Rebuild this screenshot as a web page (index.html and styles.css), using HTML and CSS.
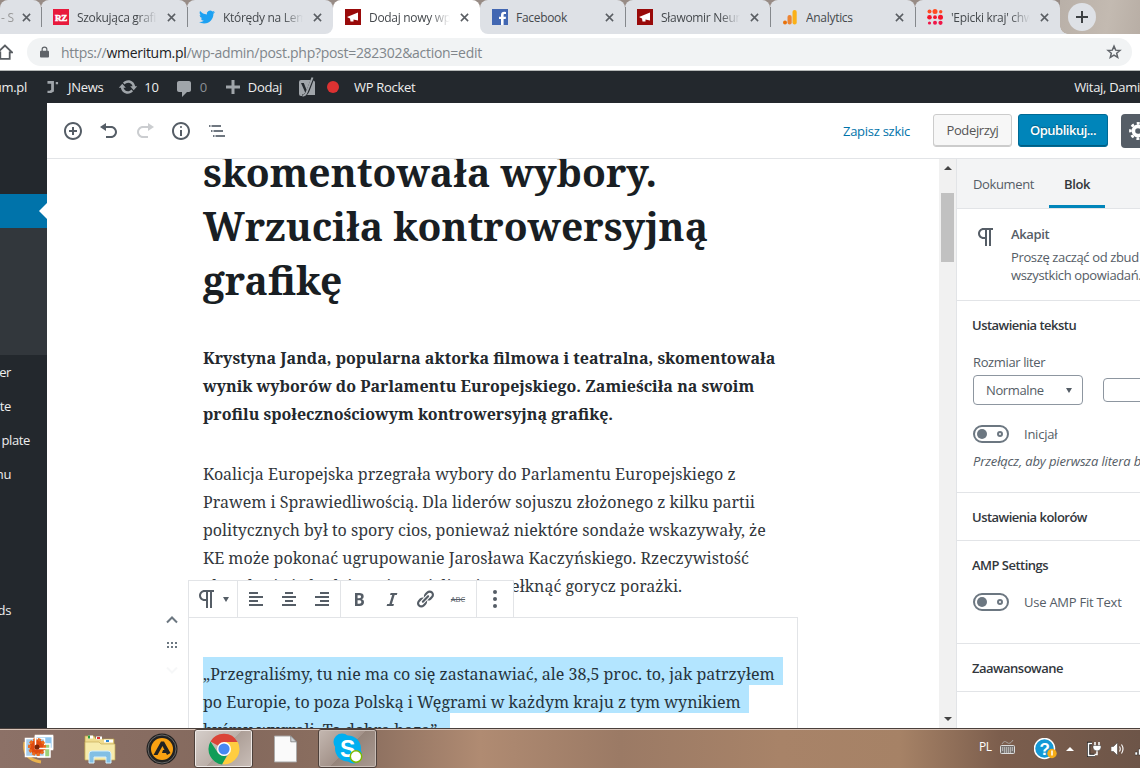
FILE: index.html
```html
<!DOCTYPE html>
<html lang="pl">
<head>
  <meta charset="UTF-8">
  <meta name="viewport" content="width=device-width, initial-scale=1.0">
  <title>Dodaj nowy wpis</title>
  <link rel="stylesheet" href="styles.css">
</head>
<body>
  <div class="screen">

    <!-- browser tabs -->
    <div class="tabs">
      <div class="tab tab-first"><span class="tab-title fade">- S</span><svg class="close" viewBox="0 0 10 10"><path d="M1 1l8 8M9 1l-8 8"/></svg></div>
      <div class="tab wide sep">
        <svg class="fav" viewBox="0 0 16 16"><rect width="16" height="16" fill="#e8193c"/><text x="8" y="11.500" text-anchor="middle" font-family="Liberation Serif, serif" font-weight="bold" font-size="9" fill="#fff" stroke="#fff" stroke-width=".5">RZ</text></svg>
        <span class="tab-title fade">Szokująca grafika</span><svg class="close" viewBox="0 0 10 10"><path d="M1 1l8 8M9 1l-8 8"/></svg>
      </div>
      <div class="tab wide sep before-active">
        <svg class="fav" viewBox="0 0 24 24"><path fill="#1da1f2" d="M23.95 4.57a10 10 0 01-2.82.78 4.96 4.96 0 002.16-2.73c-.95.56-2 .96-3.13 1.19a4.92 4.92 0 00-8.38 4.48C7.69 8.1 4.07 6.13 1.64 3.16a4.82 4.82 0 00-.67 2.48c0 1.71.87 3.21 2.19 4.1a4.9 4.9 0 01-2.23-.62v.06a4.92 4.92 0 003.95 4.83 5 5 0 01-2.21.08 4.94 4.94 0 004.6 3.42A9.87 9.87 0 010 19.54a14 14 0 007.56 2.21c9.05 0 14-7.5 14-13.99v-.63A9.94 9.94 0 0024 4.59z"/></svg>
        <span class="tab-title fade">Którędy na Lemo</span><svg class="close" viewBox="0 0 10 10"><path d="M1 1l8 8M9 1l-8 8"/></svg>
      </div>
      <div class="tab active">
        <svg class="fav" viewBox="0 0 16 16"><rect width="16" height="16" fill="#990a0a"/><path fill="#fff" d="M2 8l11-4.500v8L8.500 10.500v2H5.500L5 9.500z"/></svg>
        <span class="tab-title fade">Dodaj nowy wpis</span><svg class="close" viewBox="0 0 10 10"><path d="M1 1l8 8M9 1l-8 8"/></svg>
      </div>
      <div class="tab after-active">
        <svg class="fav" viewBox="0 0 16 16"><rect width="16" height="16" fill="#4267b2"/><path fill="#fff" d="M9 16v-6H7V7.700h2V6c0-2.200 1.300-3.200 3.200-3.200l1.800.1v2.200h-1.200c-1 0-1.200.5-1.200 1.100v1.500H14l-.3 2.300h-2.100v6z"/></svg>
        <span class="tab-title">Facebook</span><svg class="close" viewBox="0 0 10 10"><path d="M1 1l8 8M9 1l-8 8"/></svg>
      </div>
      <div class="tab sep">
        <svg class="fav" viewBox="0 0 16 16"><rect width="16" height="16" fill="#990a0a"/><path fill="#fff" d="M2 8l11-4.500v8L8.500 10.500v2H5.500L5 9.500z"/></svg>
        <span class="tab-title fade">Sławomir Neumann</span><svg class="close" viewBox="0 0 10 10"><path d="M1 1l8 8M9 1l-8 8"/></svg>
      </div>
      <div class="tab sep">
        <svg class="fav" viewBox="0 0 16 16"><circle cx="3" cy="13.500" r="2" fill="#e8710a"/><rect x="5.500" y="6" width="4.200" height="9.500" rx="2" fill="#ed8433"/><rect x="10.500" y="1" width="4.200" height="14.500" rx="2" fill="#fbb117"/></svg>
        <span class="tab-title">Analytics</span><svg class="close" viewBox="0 0 10 10"><path d="M1 1l8 8M9 1l-8 8"/></svg>
      </div>
      <div class="tab sep">
        <svg class="fav" viewBox="0 0 16 16"><g fill="#ff4b22"><circle cx="2.500" cy="2.500" r="2"/><circle cx="8" cy="2.500" r="2.500"/><circle cx="13.700" cy="2.700" r="1.700"/></g><g fill="#f5152c"><circle cx="2.500" cy="8.200" r="2.300"/><circle cx="8" cy="8.200" r="1.900"/><circle cx="13.500" cy="8.200" r="2.500"/></g><g fill="#f01548"><circle cx="2.500" cy="14" r="1.600"/><circle cx="8" cy="13.800" r="2"/><circle cx="13.500" cy="13.800" r="2.100"/></g></svg>
        <span class="tab-title fade">'Epicki kraj' chwa</span><svg class="close" viewBox="0 0 10 10"><path d="M1 1l8 8M9 1l-8 8"/></svg>
      </div>
      <div class="tab-end">
        <div class="new-tab"><svg viewBox="0 0 12 12"><path d="M6 0v12M0 6h12"/></svg></div>
      </div>
    </div>

    <!-- address bar -->
    <div class="toolbar">
      <svg class="home" viewBox="0 0 16 16"><path d="M8 1.500L1 8.300h2.300v6.500h9.400V8.300H15z"/></svg>
      <div class="omnibox">
        <svg class="lock" viewBox="0 0 10 12"><path fill="#5f6368" d="M1 4.500h8q1 0 1 1V11q0 1-1 1H1q-1 0-1-1V5.500q0-1 1-1z"/><path fill="none" stroke="#5f6368" stroke-width="1.300" d="M2.400 5V3a2.600 2.400 0 015.200 0v2"/></svg>
        <span class="url">https://<b>wmeritum.pl</b>/wp-admin/post.php?post=282302&amp;action=edit</span>
        <svg class="star" viewBox="0 0 24 24"><path d="M12 3.200l2.500 6 6.500.5-5 4.200 1.600 6.300-5.600-3.400-5.600 3.400L8 13.900 3 9.700l6.500-.5z"/></svg>
      </div>
    </div>

    <!-- WordPress admin bar -->
    <div class="adminbar">
      <span class="site">um.pl</span>
      <svg class="ab-jnews" viewBox="0 0 12 13"><path fill="#a0a5aa" d="M0 0h7v11.500L4 13H0v-2.500h2.500L4 9.500V3H0zM9 1h2.500v2.500H9z"/></svg>
      <span>JNews</span>
      <svg class="ab-update" viewBox="0 0 20 20"><path fill="#a0a5aa" d="M10.200 3.280c3.530 0 6.430 2.610 6.920 6h2.080l-3.500 4-3.500-4h2.320c-.45-1.970-2.210-3.450-4.320-3.450-1.450 0-2.730.71-3.540 1.780L4.950 5.660C6.230 4.200 8.110 3.280 10.200 3.280zm-.4 13.440c-3.520 0-6.430-2.610-6.920-6H.8l3.500-4c1.170 1.330 2.330 2.670 3.500 4H5.480c.45 1.970 2.210 3.450 4.320 3.450 1.450 0 2.730-.71 3.540-1.780l1.710 1.950c-1.280 1.460-3.150 2.380-5.250 2.380z"/></svg>
      <span>10</span>
      <svg class="ab-comment" viewBox="0 0 20 20"><path fill="#a0a5aa" d="M5 2h10c1.100 0 2 .9 2 2v7c0 1.100-.9 2-2 2h-2l-5 5v-5H5c-1.100 0-2-.9-2-2V4c0-1.100.9-2 2-2z"/></svg>
      <span class="muted">0</span>
      <svg class="ab-plus" viewBox="0 0 14 14"><path stroke="#a0a5aa" stroke-width="3" d="M7 0v14M0 7h14"/></svg>
      <span>Dodaj</span>
      <svg class="ab-yoast" viewBox="0 0 18 20"><path fill="#a0a5aa" d="M3 3h9.500L8.600 13 5.800 6H3l4.200 9.500Q6.500 17.500 4 17.500V19H3q-2 0-2-2V5q0-2 2-2zM15.500 3.500Q17 4 17 5.500V18H9q1.500-1.500 2.500-4z"/><path fill="none" stroke="#a0a5aa" stroke-width="2" d="M14.500.5L9 14.500Q7.500 18.700 4.500 18.700"/></svg>
      <i class="ab-dot"></i>
      <span>WP Rocket</span>
      <span class="hello">Witaj, Dami</span>
    </div>

    <div class="workspace">
      <div class="adminmenu">
        <div class="menu-current"></div>
        <div class="submenu"></div>
        <div class="menu-item">er</div>
        <div class="menu-item">te</div>
        <div class="menu-item plate">plate</div>
        <div class="menu-item">nu</div>
        <div class="menu-item"></div>
        <div class="menu-item"></div>
        <div class="menu-item"></div>
        <div class="menu-item">ds</div>
      </div>

      <div class="editor">
        <div class="editor-header">
          <div class="icon-btn"><svg viewBox="0 0 20 20"><path d="M10 1c-5 0-9 4-9 9s4 9 9 9 9-4 9-9-4-9-9-9zm0 16c-3.900 0-7-3.100-7-7s3.100-7 7-7 7 3.100 7 7-3.100 7-7 7zm1-11H9v3H6v2h3v3h2v-3h3V9h-3V6z"/></svg></div>
          <div class="icon-btn"><svg viewBox="0 0 20 20"><path d="M12 5H7V2L1 6l6 4V7h5c2.200 0 4 1.800 4 4s-1.800 4-4 4H7v2h5c3.300 0 6-2.700 6-6s-2.700-6-6-6z"/></svg></div>
          <div class="icon-btn disabled"><svg viewBox="0 0 20 20"><path d="M8 5h5V2l6 4-6 4V7H8c-2.200 0-4 1.800-4 4s1.800 4 4 4h5v2H8c-3.300 0-6-2.700-6-6s2.700-6 6-6z"/></svg></div>
          <div class="icon-btn"><svg viewBox="0 0 20 20"><path d="M9 15h2V9H9v6zm1-10c-.5 0-1 .5-1 1s.5 1 1 1 1-.5 1-1-.5-1-1-1zm0-4c-5 0-9 4-9 9s4 9 9 9 9-4 9-9-4-9-9-9zm0 16c-3.900 0-7-3.100-7-7s3.100-7 7-7 7 3.100 7 7-3.100 7-7 7z"/></svg></div>
          <div class="icon-btn outline"><svg viewBox="0 0 20 20"><path d="M2 4h1.500v2H2zM4.500 4H14v2H4.500zM4 9h1.500v2H4zM6.500 9H16v2H6.500zM6 14h1.500v2H6zM8.500 14H18v2H8.500z"/></svg></div>
          <div class="header-actions">
            <a class="save">Zapisz szkic</a>
            <button class="btn preview">Podejrzyj</button>
            <button class="btn publish">Opublikuj...</button>
            <div class="gear"><svg viewBox="0 0 20 20"><circle cx="10" cy="10" r="4.600" fill="none" stroke="#fff" stroke-width="3.600"/><circle cx="10" cy="10" r="7.600" fill="none" stroke="#fff" stroke-width="2.600" stroke-dasharray="3 2.969" stroke-dashoffset="1.500"/></svg></div>
          </div>
        </div>

        <div class="editor-body">
          <div class="canvas">
            <h1>skomentowała wybory.<br>Wrzuciła kontrowersyjną<br>grafikę</h1>
            <p class="lead">Krystyna Janda, popularna aktorka filmowa i teatralna, skomentowała<br>wynik wyborów do Parlamentu Europejskiego. Zamieściła na swoim<br>profilu społecznościowym kontrowersyjną grafikę.</p>
            <p>Koalicja Europejska przegrała wybory do Parlamentu Europejskiego z<br>Prawem i Sprawiedliwością. Dla liderów sojuszu złożonego z kilku partii<br>politycznych był to spory cios, ponieważ niektóre sondaże wskazywały, że<br>KE może pokonać ugrupowanie Jarosława Kaczyńskiego. Rzeczywistość<br><span class="covered">okazała się jednak inna i musieli oni prz</span>ełknąć gorycz porażki.</p>

            <div class="block">
              <p><mark>„Przegraliśmy, tu nie ma co się zastanawiać, ale 38,5 proc. to, jak patrzyłem&nbsp;&nbsp;</mark><br><mark>po Europie, to poza Polską i Węgrami w każdym kraju z tym wynikiem&nbsp;&nbsp;</mark><br><mark>byśmy wygrali. To dobra baza”&nbsp;&nbsp;&nbsp;</mark></p>

              <div class="movers">
                <svg viewBox="0 0 12 8"><path d="M1 6.500l5-5 5 5"/></svg>
                <svg class="drag" viewBox="0 0 10 6"><path d="M0 0h2v2H0zM4 0h2v2H4zM8 0h2v2H8zM0 4h2v2H0zM4 4h2v2H4zM8 4h2v2H8z"/></svg>
                <svg class="down" viewBox="0 0 12 8"><path d="M1 1.500l5 5 5-5"/></svg>
              </div>

              <div class="block-toolbar">
                <div class="group g-type">
                  <svg class="pilcrow" viewBox="0 0 24 24"><path d="M11 5v7H9.500C7.600 12 6 10.400 6 8.500S7.600 5 9.500 5H11m8-2H9.500C6.500 3 4 5.500 4 8.500S6.500 14 9.500 14H11v7h2V5h2v16h2V5h2V3z"/></svg>
                  <i class="caret"></i>
                </div>
                <div class="group g-align">
                  <svg viewBox="0 0 20 20"><path d="M12 5V3H3v2h9zm5 4V7H3v2h14zm-5 4v-2H3v2h9zm5 4v-2H3v2h14z"/></svg>
                  <svg viewBox="0 0 20 20"><path d="M14 5V3H6v2h8zm3 4V7H3v2h14zm-3 4v-2H6v2h8zm3 4v-2H3v2h14z"/></svg>
                  <svg viewBox="0 0 20 20"><path d="M17 5V3H8v2h9zm0 4V7H3v2h14zm0 4v-2H8v2h9zm0 4v-2H3v2h14z"/></svg>
                </div>
                <div class="group g-format">
                  <svg viewBox="0 0 20 20"><path d="M6 4v13h4.540c1.370 0 2.460-.33 3.260-1 .8-.66 1.200-1.580 1.200-2.770 0-.84-.17-1.510-.51-2.010s-.9-.85-1.670-1.030v-.09c.57-.1 1.020-.4 1.360-.9s.51-1.130.51-1.910c0-1.140-.39-1.980-1.170-2.500C12.750 4.260 11.500 4 9.780 4H6zm2.570 5.150V6.260h1.360c.73 0 1.270.11 1.610.32.34.22.51.58.51 1.070 0 .54-.16.92-.47 1.150s-.82.35-1.510.35h-1.500zm0 2.190h1.600c1.440 0 2.160.53 2.160 1.610 0 .6-.17 1.050-.51 1.340s-.86.430-1.570.430H8.570v-3.380z"/></svg>
                  <svg viewBox="0 0 20 20"><path d="M14.780 6h-2.130l-2.800 9h2.120l-.62 2H4.600l.62-2h2.140l2.800-9H8.030l.62-2h6.750z"/></svg>
                  <svg viewBox="0 0 20 20"><path d="M17.740 2.760c1.680 1.690 1.680 4.410 0 6.100l-1.530 1.520c-1.120 1.120-2.700 1.470-4.140 1.090l2.620-2.610.76-.77.76-.76c.84-.84.84-2.200 0-3.040-.84-.85-2.200-.85-3.040 0l-.77.76-3.380 3.380c-.37-1.440-.02-3.020 1.100-4.140l1.520-1.530c1.690-1.680 4.420-1.680 6.100 0zM8.590 13.430l5.340-5.340c.42-.42.42-1.100 0-1.520-.44-.43-1.130-.39-1.530 0l-5.330 5.340c-.42.42-.42 1.100 0 1.520.44.430 1.130.39 1.520 0zm-.76 2.290l4.140-4.150c.38 1.440.03 3.020-1.090 4.140l-1.520 1.530c-1.690 1.680-4.410 1.680-6.100 0-1.680-1.680-1.680-4.420 0-6.100l1.530-1.520c1.120-1.120 2.700-1.470 4.140-1.100l-4.140 4.150c-.85.84-.85 2.200 0 3.050.84.84 2.200.84 3.040 0z"/></svg>
                  <s class="strike">ABC</s>
                </div>
                <div class="group g-more">
                  <svg viewBox="0 0 20 20"><circle cx="10" cy="3" r="2"/><circle cx="10" cy="10" r="2"/><circle cx="10" cy="17" r="2"/></svg>
                </div>
              </div>
            </div>
          </div>

          <div class="scrollbar">
            <i class="arrow-up"></i>
            <div class="thumb"></div>
            <i class="arrow-down"></i>
          </div>

          <div class="settings">
            <div class="settings-tabs">
              <div class="stab">Dokument</div>
              <div class="stab current">Blok</div>
            </div>
            <div class="block-card">
              <svg class="pilcrow" viewBox="0 0 24 24"><path d="M11 5v7H9.500C7.600 12 6 10.400 6 8.500S7.600 5 9.500 5H11m8-2H9.500C6.500 3 4 5.500 4 8.500S6.500 14 9.500 14H11v7h2V5h2v16h2V5h2V3z"/></svg>
              <div>
                <div class="card-title">Akapit</div>
                <div class="card-desc">Proszę zacząć od zbud<br>wszystkich opowiadań.</div>
              </div>
            </div>
            <div class="panel panel-text">
              <div class="panel-title">Ustawienia tekstu</div>
              <div class="label">Rozmiar liter</div>
              <div class="size-row">
                <div class="select">Normalne<i class="caret"></i></div>
                <div class="number"></div>
              </div>
              <div class="toggle-row"><div class="toggle"><i></i><b></b></div>Inicjał</div>
              <div class="hint">Przełącz, aby pierwsza litera b</div>
            </div>
            <div class="panel panel-small">
              <div class="panel-title">Ustawienia kolorów</div>
            </div>
            <div class="panel panel-amp">
              <div class="panel-title">AMP Settings</div>
              <div class="toggle-row"><div class="toggle"><i></i><b></b></div>Use AMP Fit Text</div>
            </div>
            <div class="panel panel-small">
              <div class="panel-title">Zaawansowane</div>
            </div>
          </div>
        </div>
      </div>
    </div>

    <!-- Windows taskbar -->
    <div class="taskbar">
      <div class="task t-photos">
        <svg viewBox="0 0 32 32"><path d="M3 9q-3 17 16 20" fill="none" stroke="#e9b24e" stroke-width="3"/><rect x="13.500" y="2.500" width="17" height="14" fill="#8ec6ef" stroke="#fff" stroke-width="1.500"/><rect x="16" y="11" width="12" height="13" fill="#9bd27a" stroke="#fff" stroke-width="1.500"/><rect x="3.500" y="5.500" width="19" height="18" fill="#a5cdec" stroke="#fff" stroke-width="1.500"/><circle cx="15" cy="14" r="7.500" fill="#e04a10" stroke="#ec6a1d" stroke-width="3" stroke-dasharray="3 1.500"/><rect x="13.500" y="3.500" width="17" height="12" fill="none" stroke="#fff" stroke-width="1.500"/><circle cx="15" cy="14" r="2.500" fill="#7c2408"/></svg>
      </div>
      <div class="task t-folder">
        <svg viewBox="0 0 32 32"><path d="M1 3h9l2 3h18v20H1z" fill="#efdb8e" stroke="#b99e46" stroke-width=".7"/><path d="M4 4h5M12 5h6M20 8h9" stroke="#fff" stroke-width="3"/><path d="M4 4h2" stroke="#2c9c3f" stroke-width="3"/><path d="M13 5h3" stroke="#d33" stroke-width="2"/><path d="M22 8h3" stroke="#2d86d2" stroke-width="2"/><path d="M1 9h14l2 2h14v16H1z" fill="#f7ebab" stroke="#c6ad59" stroke-width=".7"/><path d="M5 30V21q0-3 3-3h16q3 0 3 3v9h-5v-6H10v6z" fill="#82bfe4" stroke="#d4effc"/></svg>
      </div>
      <div class="task t-aimp">
        <svg viewBox="0 0 32 32"><circle cx="16" cy="16" r="15.500" fill="#222"/><circle cx="16" cy="16" r="14" fill="none" stroke="#666"/><circle cx="16" cy="16" r="11" fill="#f9a112"/><path fill="#222" d="M7.500 22L15 8.500h3L24.500 20l-3.500 2-1-2h-4l1-3h1.500L16.500 13 11.500 22z"/></svg>
      </div>
      <div class="task-btn">
        <svg viewBox="0 0 32 32"><path fill="#db4437" d="M16 16L2.500 8.500a15.500 15.500 0 0127 .5H16z"/><path fill="#ffcd40" d="M16 9h13.800A15.500 15.500 0 0116 31.500l-2-1 8-11z"/><path fill="#0f9d58" d="M2.500 8.500L10 20q3 4 9 2.500l-5 9A15.500 15.500 0 012.500 8.500z"/><circle cx="16" cy="16" r="7" fill="#fff"/><circle cx="16" cy="16" r="5.600" fill="#4688f1"/></svg>
      </div>
      <div class="task t-file">
        <svg viewBox="0 0 24 28"><path d="M.5.500h17l6 6v21H.5z" fill="#fafafa" stroke="#aaa"/><path d="M17.500.500v6h6z" fill="#cfd3d6" stroke="#777" stroke-width=".8"/></svg>
      </div>
      <div class="task-btn">
        <svg viewBox="0 0 32 32"><circle cx="10" cy="9" r="8.500" fill="#00aff0"/><circle cx="21.500" cy="22" r="8.500" fill="#00aff0"/><circle cx="16" cy="15.500" r="13" fill="#00aff0"/><text x="15.500" y="23.500" text-anchor="middle" font-family="Liberation Sans, sans-serif" font-weight="bold" font-size="23" fill="#fff">S</text><circle cx="24" cy="23.500" r="5.700" fill="#fff" stroke="#7fba00" stroke-width="1.500"/></svg>
      </div>
      <div class="tray">
        <span>PL</span>
        <svg class="kbd" viewBox="0 0 15 14"><path d="M2 4Q4 0 7 2.500T13 0" fill="none" stroke="#a8a39f"/><rect x=".5" y="5.500" width="14" height="8" rx="1" fill="#75706d" stroke="#ddd"/><path d="M2 8h11M2 10h11M4 12h7" stroke="#eee" stroke-dasharray="1.200 .8"/></svg>
        <svg class="help" viewBox="0 0 23 22"><circle cx="10.500" cy="10.500" r="10" fill="#1499d6" stroke="#fff" stroke-width="1.500"/><text x="10.500" y="16.500" text-anchor="middle" font-family="Liberation Sans, sans-serif" font-weight="bold" font-size="17" fill="#fff">?</text><circle cx="18" cy="15.500" r="4.700" fill="#f5ac18"/><path d="M18 12.500v5" stroke="#fff" stroke-width="1.500"/></svg>
        <i class="tray-up"></i>
        <svg class="plug" viewBox="0 0 14 16"><path d="M5 2.500H1.500v12H8" fill="none" stroke="#222" stroke-width="3.500"/><path d="M5 2.500H1.500v12H8" fill="none" stroke="#fff" stroke-width="1.500"/><path d="M8 1v4M12 1v4M10 9v4.500H7.500" stroke="#fff" stroke-width="1.500" fill="none"/><path d="M6 4.500h8V7q-1 3-4 3T6 7z" fill="#fff" stroke="#333" stroke-width=".5"/></svg>
        <svg class="vol" viewBox="0 0 14 14"><path d="M0 4.500h2.500L6.500.5v13l-4-4H0z" fill="#fff" stroke="#333" stroke-width=".5"/><path d="M8.500 4.500q1.500 2.500 0 5M10.500 2.500q3 4.500 0 9" fill="none" stroke="#fff" stroke-width="1.100"/></svg>
        <svg class="net" viewBox="0 0 5 14"><path d="M0 10h2.500v3H0zM3.500 7H6v6H3.500z" fill="#fff" stroke="#222" stroke-width=".5"/></svg>
      </div>
    </div>
  </div>
</body>
</html>
```
FILE: styles.css
```css
* {
  box-sizing: border-box;
}

body {
  margin: 0;
  font-family: "Open Sans", "Noto Sans", sans-serif;
  font-size: 13px;
  letter-spacing: -0.37px;
  color: #555d66;
}

.screen {
  width: 1140px;
  height: 768px;
  overflow: hidden;
  display: flex;
  flex-direction: column;
  background: #fff;
}

svg,
i {
  flex: none;
  display: block;
}

/* tabs */

.tabs {
  display: flex;
  height: 34px;
  background: linear-gradient(#978b85, #978b85) 0 0 / 1060px 10px no-repeat, #fff;
}

.tab {
  position: relative;
  flex: none;
  width: 145px;
  height: 34px;
  padding: 0 11px 0 12px;
  display: flex;
  align-items: center;
  background: #dee1e6;
  border-radius: 8px 8px 0 0;
  color: #45494d;
  font-size: 12px;
  letter-spacing: -0.3px;
}

.tab.wide {
  width: 146px;
}

.tab.sep::before {
  content: "";
  position: absolute;
  left: 0;
  top: 7px;
  width: 1px;
  height: 20px;
  background: #85888c;
}

.tab-first {
  width: 41px;
  padding: 0 10px 0 1px;
}

.tab-first .tab-title {
  margin-right: 4px;
  color: #999;
}

.tab.before-active {
  border-radius: 8px 8px 8px 0;
}

.tab.active {
  width: 147px;
  background: #fff;
}

.tab.after-active {
  border-radius: 8px 8px 0 8px;
}

.fav {
  width: 16px;
  height: 16px;
  margin-right: 8px;
}

.tab-title {
  flex: 1;
  min-width: 0;
  overflow: hidden;
  white-space: nowrap;
  margin-right: 10px;
}

.fade {
  -webkit-mask-image: linear-gradient(to right, #000 75%, transparent);
  mask-image: linear-gradient(to right, #000 75%, transparent);
}

.close {
  width: 9px;
  height: 9px;
  fill: none;
  stroke: #5a5e63;
  stroke-width: 1.7;
}

.tab-end {
  flex: 1;
  padding: 3px 0 0 8px;
  background:
    radial-gradient(circle at 8px 0, transparent 7.5px, #dee1e6 8px) 0 26px / 8px 8px no-repeat,
    linear-gradient(100deg, #b9b0a8, #c3bab1 60%, #b8aea5);
}

.new-tab {
  width: 28px;
  height: 28px;
  border-radius: 50%;
  background: #dee1e6;
  display: flex;
  align-items: center;
  justify-content: center;
}

.new-tab svg {
  width: 12px;
  height: 12px;
  stroke: #3c4043;
  stroke-width: 2;
}

/* address bar */

.toolbar {
  height: 37px;
  display: flex;
  align-items: center;
  padding-right: 8px;
  border-bottom: 1px solid #b6b9b8;
}

.home {
  width: 16px;
  height: 16px;
  margin-left: -3px;
  margin-right: 14px;
  fill: none;
  stroke: #5a5e63;
  stroke-width: 1.8;
}

.omnibox {
  flex: 1;
  height: 28px;
  border-radius: 14px;
  background: #f1f3f4;
  display: flex;
  align-items: center;
  padding: 0 10px 0 13px;
}

.lock {
  width: 9px;
  height: 12px;
}

.url {
  flex: 1;
  margin-left: 12px;
  font-size: 14px;
  letter-spacing: -0.29px;
  color: #80868b;
}

.url b {
  font-weight: normal;
  color: #202124;
}

.star {
  width: 16px;
  height: 16px;
  fill: none;
  stroke: #5f6368;
  stroke-width: 2.2;
}

/* admin bar */

.adminbar {
  height: 32px;
  background: #23282d;
  color: #eee;
  display: flex;
  align-items: center;
  white-space: nowrap;
  letter-spacing: -0.3px;
}

.site {
  width: 28px;
  margin-left: -1px;
  display: flex;
  justify-content: flex-end;
}

.ab-jnews {
  width: 12px;
  height: 12px;
  margin: 0 9px 0 20px;
}

.ab-update {
  width: 20px;
  height: 20px;
  margin: 0 6px 0 15px;
}

.ab-comment {
  width: 20px;
  height: 20px;
  margin: 3px 6px 0 15px;
}

.muted {
  color: #8b9095;
}

.ab-plus {
  width: 14px;
  height: 14px;
  margin: 0 8px 0 19px;
}

.ab-yoast {
  width: 18px;
  height: 20px;
  margin-left: 16px;
}

.ab-dot {
  width: 12px;
  height: 12px;
  border-radius: 50%;
  background: #dc3232;
  margin: 0 15px 0 11px;
}

.hello {
  margin-left: auto;
}

/* admin menu */

.workspace {
  height: 625px;
  display: flex;
  overflow: hidden;
}

.adminmenu {
  flex: none;
  width: 47px;
  padding-top: 91px;
  background: #23282d;
  color: #eee;
}

.menu-current {
  height: 34px;
  background: #0073aa;
  display: flex;
  align-items: center;
  justify-content: flex-end;
}

.menu-current::after {
  content: "";
  border: 8px solid transparent;
  border-left: 0;
  border-right-color: #fff;
}

.submenu {
  height: 127px;
  background: #32373c;
}

.menu-item {
  width: 11px;
  height: 34px;
  line-height: 34px;
  display: flex;
  justify-content: flex-end;
}

.menu-item.plate {
  width: 30px;
}

/* editor */

.editor {
  flex: 1;
  min-width: 0;
  display: flex;
  flex-direction: column;
}

.editor-header {
  height: 56px;
  padding-left: 8px;
  display: flex;
  align-items: center;
  border-bottom: 1px solid #e2e4e7;
}

.icon-btn {
  flex: none;
  width: 36px;
  display: flex;
  justify-content: center;
}

.icon-btn svg,
.group svg {
  width: 20px;
  height: 20px;
  fill: #555d66;
}

.icon-btn.outline svg {
  fill: #6f7780;
}

.disabled {
  opacity: 0.3;
}

.header-actions {
  flex: 1;
  min-width: 0;
  display: flex;
  align-items: center;
  padding-left: 608px;
  overflow: hidden;
}

.save {
  flex: none;
  width: 90px;
  color: #0073aa;
  letter-spacing: -0.27px;
  white-space: nowrap;
}

.btn {
  flex: none;
  height: 33px;
  padding: 0 0 1px;
  border-radius: 3px;
  font: inherit;
  letter-spacing: inherit;
}

.preview {
  width: 79px;
  border: 1px solid #ccc;
  box-shadow: inset 0 -1px 0 #ccc;
  background: #f7f7f7;
  color: #555;
}

.publish {
  width: 90px;
  margin-left: 6px;
  border: 1px solid #006a95;
  box-shadow: inset 0 -1px 0 #005d82;
  background: #0085ba;
  color: #fff;
  font-weight: 600;
  letter-spacing: -0.5px;
  text-shadow: 0 -1px 1px #005d82;
}

.gear {
  flex: none;
  width: 34px;
  height: 34px;
  margin-left: 13px;
  padding: 7px;
  border-radius: 4px;
  background: #555d66;
}

.editor-body {
  flex: 1;
  min-height: 0;
  display: flex;
}

.canvas {
  width: 892px;
  padding-left: 156px;
  overflow: hidden;
  font-family: "Noto Serif", "DejaVu Serif Condensed", serif;
  font-size: 16px;
  line-height: 28px;
  letter-spacing: 0;
  white-space: nowrap;
  color: #32373c;
}

h1 {
  margin: -14px 0 37px;
  font-size: 39.04px;
  line-height: 54px;
  color: #191e23;
}

.canvas p {
  margin: 0;
}

.canvas .lead {
  margin-bottom: 32px;
  font-weight: bold;
  color: #23282d;
}

.covered {
  display: inline-block;
  width: 308px;
  height: 28px;
  vertical-align: top;
  overflow: hidden;
}

.block {
  position: relative;
  width: 610px;
  height: 160px;
  margin: 17px 0 0 -15px;
  padding: 39px 0 0 14px;
  border: 1px solid #e2e4e7;
}

mark {
  display: inline-block;
  height: 28px;
  line-height: 34px;
  vertical-align: top;
  background: #b3e5ff;
  color: #26343d;
}

.movers {
  position: absolute;
  left: -23px;
  top: -2px;
  width: 12px;
  display: flex;
  flex-direction: column;
  align-items: center;
  gap: 18px;
}

.movers svg {
  width: 12px;
  height: 8px;
  fill: none;
  stroke: #6c7781;
  stroke-width: 2;
}

.movers .drag {
  width: 10px;
  height: 6px;
  fill: #6c7781;
  stroke: none;
}

.movers .down {
  opacity: 0.05;
}

/* floating block toolbar */

.block-toolbar {
  position: absolute;
  left: -1px;
  top: -38px;
  height: 38px;
  display: flex;
  background: #fff;
  border: 1px solid #e2e4e7;
}

.group {
  display: flex;
  align-items: center;
  border-right: 1px solid #e2e4e7;
}

.group:last-child {
  border-right: 0;
}

.g-type {
  width: 49px;
  padding-left: 6px;
}

.group .pilcrow {
  width: 24px;
  height: 24px;
}

.g-type .caret {
  margin-left: 4px;
}

.caret {
  border: 3.5px solid transparent;
  border-top: 5px solid #555d66;
  border-bottom: 0;
}

.g-align {
  width: 103px;
  padding-left: 8px;
  gap: 13px;
}

.g-format {
  width: 136px;
  padding-left: 8px;
  gap: 13px;
}

.strike {
  width: 20px;
  font: 7.5px "Open Sans", sans-serif;
  text-align: center;
  color: #555d66;
}

.g-more {
  width: 36px;
  justify-content: center;
}

/* scrollbar */

.scrollbar {
  flex: none;
  width: 17px;
  padding: 7px 0 7px;
  background: #f1f1f1;
  display: flex;
  flex-direction: column;
  align-items: center;
}

.arrow-up {
  border: 4px solid transparent;
  border-top: 0;
  border-bottom-color: #444;
}

.thumb {
  width: 13px;
  height: 69px;
  margin-top: 23px;
  background: #c1c1c1;
}

.arrow-down {
  margin-top: auto;
  border: 4px solid transparent;
  border-bottom: 0;
  border-top-color: #444;
}

/* settings panel */

.settings {
  flex: none;
  width: 184px;
  overflow: hidden;
  white-space: nowrap;
  border-left: 1px solid #e2e4e7;
}

.settings-tabs {
  height: 50px;
  display: flex;
  background: #f3f4f5;
  border-bottom: 1px solid #e2e4e7;
}

.stab {
  width: 92px;
  height: 49px;
  line-height: 50px;
  padding-left: 16px;
  color: #555d66;
}

.stab.current {
  width: 56px;
  padding-left: 0;
  text-align: center;
  color: #32373c;
  font-weight: 600;
  border-bottom: 3px solid #0085ba;
}

.block-card {
  height: 92px;
  padding: 16px 0 0 17px;
  display: flex;
  gap: 13px;
  border-bottom: 1px solid #e2e4e7;
}

.block-card .pilcrow {
  width: 24px;
  height: 24px;
  fill: #555d66;
}

.card-title {
  height: 18px;
  line-height: 19px;
  margin-bottom: 5px;
  font-weight: 600;
}

.card-desc {
  line-height: 18px;
}

.panel {
  padding: 15px 0 0 15px;
  border-bottom: 1px solid #e2e4e7;
}

.panel-title {
  height: 18px;
  line-height: 18px;
  font-weight: 600;
  letter-spacing: -0.52px;
  color: #32373c;
}

.panel-text {
  height: 192px;
}

.label {
  margin: 19px 0 4px 1px;
  line-height: 18px;
}

.size-row {
  display: flex;
  align-items: center;
  gap: 20px;
  margin-left: 1px;
}

.select {
  flex: none;
  width: 110px;
  height: 30px;
  padding: 0 10px 0 12px;
  display: flex;
  align-items: center;
  justify-content: space-between;
  border: 1px solid #8d96a0;
  border-radius: 4px;
}

.number {
  flex: none;
  width: 60px;
  height: 24px;
  border: 1px solid #8d96a0;
  border-radius: 4px;
}

.toggle-row {
  display: flex;
  align-items: center;
  height: 18px;
  margin: 20px 0 0 1px;
  letter-spacing: -0.24px;
}

.toggle {
  width: 36px;
  height: 18px;
  margin-right: 15px;
  padding: 0 4px 0 2px;
  display: flex;
  align-items: center;
  justify-content: space-between;
  border: 2px solid #6c7781;
  border-radius: 9px;
}

.toggle i {
  width: 10px;
  height: 10px;
  border-radius: 50%;
  background: #6c7781;
}

.toggle b {
  width: 6px;
  height: 6px;
  border: 2px solid #6c7781;
  border-radius: 50%;
}

.hint {
  margin: 9px 0 0 1px;
  line-height: 18px;
  font-style: italic;
  letter-spacing: -0.14px;
}

.panel-small {
  height: 48px;
}

.panel-amp {
  height: 103px;
}

.panel-small + .panel-amp,
.panel-amp + .panel-small {
  padding-top: 15px;
}

.panel-amp .toggle-row {
  margin-top: 19px;
}

/* taskbar */

.taskbar {
  height: 40px;
  display: flex;
  align-items: center;
  border-top: 1px solid #4a403c;
  box-shadow: inset 0 1px 0 #d9c4b8;
  background: linear-gradient(90deg, #8c7167 0, #84695d 240px, #8d7060 370px, #b08b72 480px, #9b7a65 620px, #a88368 780px, #a68266 900px, #7c5e4d 1000px, #6d5548 1140px);
}

.task {
  flex: none;
  display: flex;
  justify-content: center;
}

.task svg,
.task-btn svg {
  width: 32px;
  height: 32px;
}

.t-photos {
  margin-left: 22px;
}

.t-folder {
  margin-left: 30px;
}

.t-aimp {
  margin-left: 30px;
  margin-right: 16px;
}

.task-btn {
  width: 59px;
  height: 39px;
  display: flex;
  align-items: center;
  justify-content: center;
  border: 1px solid #4d403a;
  border-radius: 3px;
  box-shadow: inset 0 0 0 1px #efe9e6;
  background: linear-gradient(135deg, #d6cfcb, #bcb0a9 50%, #ad9f97 51%, #c9beb8);
}

.task-btn ~ .task-btn {
  box-shadow: inset 0 0 0 1px #c9bdb6;
  background: linear-gradient(135deg, #c4b8b1, #a39289 50%, #95847a 51%, #a99a91);
}

.task.t-file {
  width: 65px;
}

.task.t-file svg {
  width: 23px;
  height: 28px;
}

.tray {
  flex: 1;
  margin-left: 602px;
  display: flex;
  align-items: center;
  overflow: hidden;
  color: #fff;
  font-size: 12px;
}

.tray span {
  width: 22px;
  margin-top: -5px;
}

.kbd {
  width: 15px;
  height: 14px;
  margin-top: -3px;
}

.help {
  width: 23px;
  height: 22px;
  margin: 0 9px 0 19px;
}

.tray-up {
  border: 4px solid transparent;
  border-top: 0;
  border-bottom-color: #fff;
}

.plug {
  width: 14px;
  height: 16px;
  margin: 0 10px 0 13px;
}

.vol {
  width: 14px;
  height: 14px;
}

.net {
  width: 5px;
  height: 14px;
  margin-left: 10px;
}
```
